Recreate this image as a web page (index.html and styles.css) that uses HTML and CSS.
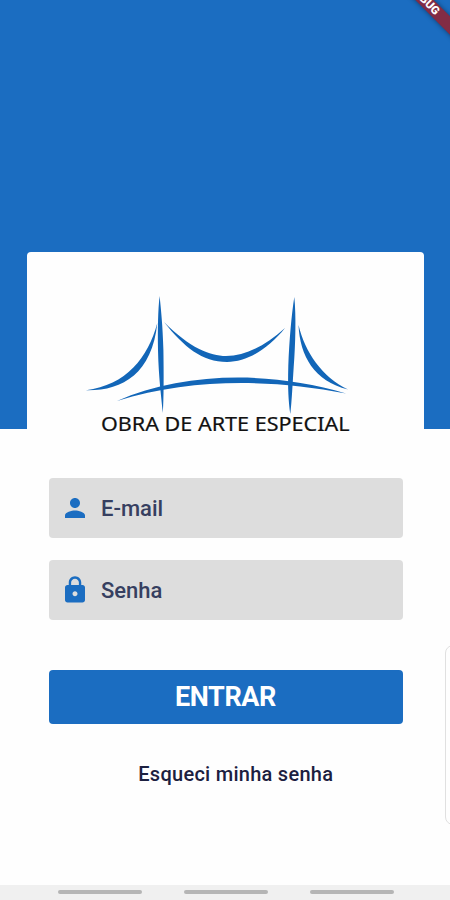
FILE: index.html
```
<!DOCTYPE html>
<html lang="pt-BR">
<head>
<meta charset="utf-8">
<title>Obra de Arte Especial</title>
<link rel="stylesheet" href="styles.css">
</head>
<body>
<main class="screen">
  <div class="banner"><span>DEBUG</span></div>
  <section class="card">
    <svg class="logo" viewBox="75 285 300 155" role="img" aria-label="Obra de Arte Especial">
      <g fill="#1266b8">
        <path d="M159.6 296C161 310 162.700 325 163.400 350C163.800 375 163.800 398 162.800 413C161.500 398 158.600 378 158 350C157.700 328 158 310 159.600 296Z"/>
        <path d="M294.300 297C296.200 315 295.500 345 293.700 367C292.500 385 291.800 402 290.300 414C288.500 402 287.700 388 288.300 366C289.300 340 291.500 315 294.300 297Z"/>
        <path d="M157.300 323C152 374 122 391 86 390.300C126 385 148 358 157.300 323Z"/>
        <path d="M164 322C190 348 210 356 226 356C246 356 266 345 285 328C269 348 248 362 227 362C202 362 184 347 164 322Z"/>
        <path d="M298.500 325C305 352 322 377 348 389.500C314 381 300 356 298.500 325Z"/>
        <path d="M117 401C184 372 270 370.500 346 393.500C270 379 192 378 117 401Z"/>
      </g>
      <text class="logo-text" x="101" y="431" textLength="248.500" lengthAdjust="spacingAndGlyphs">OBRA DE ARTE ESPECIAL</text>
    </svg>
  </section>
  <form class="form">
    <label class="field">
      <svg class="icon" viewBox="0 0 24 24"><path d="M12 12c2.210 0 4-1.790 4-4s-1.790-4-4-4-4 1.790-4 4 1.790 4 4 4zm0 2c-2.670 0-8 1.340-8 4v2h16v-2c0-2.660-5.330-4-8-4z"/></svg>
      <span>E-mail</span>
    </label>
    <label class="field">
      <svg class="icon" viewBox="0 0 24 24"><path d="M18 8h-1V6c0-2.760-2.240-5-5-5S7 3.240 7 6v2H6c-1.100 0-2 .9-2 2v10c0 1.100.9 2 2 2h12c1.100 0 2-.9 2-2V10c0-1.100-.9-2-2-2zm-6 9c-1.100 0-2-.9-2-2s.9-2 2-2 2 .9 2 2-.9 2-2 2zm3.100-9H8.900V6c0-1.710 1.390-3.100 3.100-3.100s3.100 1.390 3.100 3.100v2z"/></svg>
      <span>Senha</span>
    </label>
    <button class="submit" type="button">ENTRAR</button>
    <a class="forgot">Esqueci minha senha</a>
  </form>
  <div class="edge-panel"></div>
  <nav class="navbar"><i></i><i></i><i></i></nav>
</main>
</body>
</html>
```
FILE: styles.css
```
* { box-sizing: border-box; }
body { margin: 0; font-family: Roboto, sans-serif; }
.screen {
  position: relative;
  display: flex;
  flex-direction: column;
  height: 900px;
  padding-top: 251.5px;
  overflow: hidden;
  background: linear-gradient(#1b6dc1 429px, #fefefe 429px);
}
.banner {
  position: absolute;
  left: 363.5px;
  top: -5px;
  width: 124px;
  height: 13px;
  padding-right: 4px;
  transform: rotate(45deg);
  background: #822c45;
  box-shadow: 0 0 5px rgba(0, 0, 0, .45);
  color: #fff;
  font-size: 11.5px;
  font-weight: 900;
  line-height: 13px;
  text-align: center;
}
.card {
  width: 397px;
  height: 190px;
  margin-left: 27px;
  padding: 33.5px 0 0 48px;
  border-radius: 4px 4px 0 0;
  background: #fefefe;
}
.logo { display: block; width: 300px; height: 155px; }
.logo-text { font-family: "Noto Sans", sans-serif; font-size: 19.5px; fill: #111; stroke: #111; stroke-width: .2px; }
.form {
  display: flex;
  flex-direction: column;
  width: 354px;
  margin: 36.5px 0 0 48.5px;
}
.field {
  display: flex;
  align-items: center;
  gap: 11px;
  height: 60px;
  margin-bottom: 22px;
  padding-left: 11.5px;
  border-radius: 4px;
  background: #ddd;
  color: #363f60;
  font-size: 22px;
  font-weight: 500;
}
.icon { width: 30px; height: 30px; fill: #1b6dc1; }
.submit {
  height: 54px;
  margin-top: 28px;
  padding: 0;
  border: 0;
  border-radius: 4px;
  background: #1b6dc1;
  color: #fff;
  font: 700 27px/54px Roboto, sans-serif;
  letter-spacing: -.4px;
}
.forgot {
  margin: 37px 0 0 20.500px;
  color: #1c2040;
  font-size: 20px;
  font-weight: 500;
  letter-spacing: .27px;
  line-height: 26px;
  text-align: center;
}
.edge-panel {
  position: absolute;
  left: 445px;
  top: 645px;
  width: 30px;
  height: 180px;
  border: 1.5px solid #e0e0e0;
  border-radius: 8px;
}
.navbar {
  display: flex;
  gap: 42px;
  height: 15.5px;
  margin-top: auto;
  padding: 5.5px 0 0 57.5px;
  background: #f0f0f0;
}
.navbar i { width: 84px; height: 4px; border-radius: 2px; background: #b5b5b5; }
```
